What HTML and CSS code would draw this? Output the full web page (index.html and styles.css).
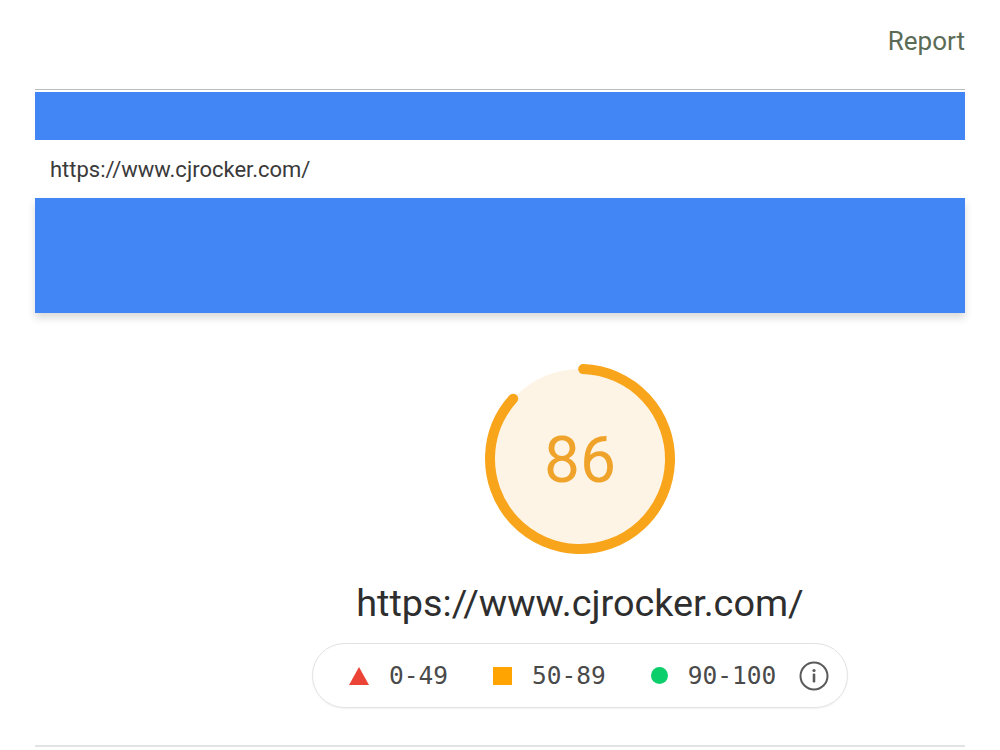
FILE: index.html
```html
<!DOCTYPE html>
<html>
<head>
<meta charset="utf-8">
<link rel="stylesheet" href="styles.css">
</head>
<body>
<div class="page">
  <header class="top">
    <span class="report">Report</span>
  </header>
  <div class="band band-top"></div>
  <div class="url-row">https://www.cjrocker.com/</div>
  <div class="band band-bottom"></div>
  <section class="score">
    <svg class="gauge" width="200" height="200" viewBox="0 0 200 200">
      <circle cx="100" cy="100" r="90" fill="#fdf4e6"/>
      <circle cx="100" cy="100" r="90" fill="none" stroke="#f8a51b" stroke-width="10" stroke-linecap="round"
        stroke-dasharray="486.3 565.5" transform="rotate(-88 100 100)"/>
      <text x="100" y="123" text-anchor="middle" class="gauge-num">86</text>
    </svg>
    <div class="score-url">https://www.cjrocker.com/</div>
    <div class="legend">
      <span class="item"><svg width="20" height="18" viewBox="0 0 20 18"><polygon points="10,0 20,18 0,18" fill="#eb4436"/></svg><span class="range">0-49</span></span>
      <span class="item"><span class="sq"></span><span class="range">50-89</span></span>
      <span class="item"><span class="dot"></span><span class="range">90-100</span></span>
      <svg class="info" width="30" height="30" viewBox="0 0 30 30">
        <circle cx="15" cy="15" r="13.5" fill="none" stroke="#5a5a5a" stroke-width="2"/>
        <circle cx="15" cy="9.5" r="1.6" fill="#5a5a5a"/>
        <rect x="13.7" y="12.5" width="2.6" height="9" rx="1" fill="#5a5a5a"/>
      </svg>
    </div>
  </section>
  <div class="rule"></div>
</div>
</body>
</html>
```
FILE: styles.css
```css
html, body {
  margin: 0;
  padding: 0;
  background: #ffffff;
}
.page {
  width: 930px;
  margin-left: 35px;
  font-family: Roboto, "Liberation Sans", sans-serif;
}
.top {
  height: 89px;
  display: flex;
  justify-content: flex-end;
  align-items: flex-start;
  border-bottom: 1px solid #b9bec4;
}
.report {
  margin-top: 26px;
  font-size: 26px;
  line-height: 30px;
  color: #5b6b55;
}
.band {
  background: #4285f4;
}
.band-top {
  margin-top: 2px;
  height: 48px;
}
.url-row {
  height: 58px;
  display: flex;
  align-items: center;
  padding-left: 15px;
  font-size: 22px;
  color: #3a3a3a;
}
.band-bottom {
  height: 115px;
  box-shadow: 0 5px 8px rgba(0, 0, 0, 0.15);
}
.score {
  padding-left: 160px;
  display: flex;
  flex-direction: column;
  align-items: center;
}
.gauge {
  margin-top: 46px;
  display: block;
}
.gauge-num {
  font-family: Roboto, "Liberation Sans", sans-serif;
  font-size: 64px;
  fill: #f0a32a;
}
.score-url {
  margin-top: 22px;
  font-size: 37.8px;
  line-height: 44px;
  color: #2e2e2e;
}
.legend {
  margin-top: 18px;
  height: 65px;
  box-sizing: border-box;
  width: 536px;
  border: 1px solid #e2e2e2;
  border-radius: 33px;
  box-shadow: 0 1px 2px rgba(0, 0, 0, 0.06);
  display: flex;
  align-items: center;
  padding-left: 36px;
  gap: 45px;
}
.item {
  display: flex;
  align-items: center;
  gap: 20px;
}
.item svg {
  display: block;
}
.range {
  font-family: "DejaVu Sans Mono", "Liberation Mono", monospace;
  font-size: 24.5px;
  color: #4a4a4a;
}
.sq {
  width: 19px;
  height: 18px;
  background: #ffa400;
}
.dot {
  width: 17px;
  height: 17px;
  border-radius: 50%;
  background: #0cce6b;
}
.info {
  display: block;
  margin-left: -22px;
}
.rule {
  margin-top: 37px;
  height: 2px;
  background: #e4e4e4;
}
```
